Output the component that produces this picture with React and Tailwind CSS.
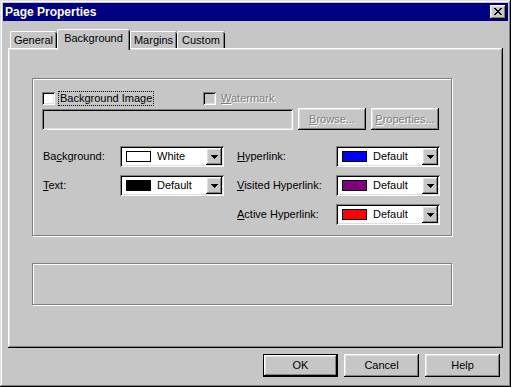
import React from "react";

const raised =
  "shadow-[inset_-1px_-1px_#000,inset_1px_1px_#fff,inset_-2px_-2px_#808080,inset_2px_2px_#dfdfdf]";
const sunken =
  "shadow-[inset_1px_1px_#808080,inset_-1px_-1px_#fff,inset_2px_2px_#000,inset_-2px_-2px_#dfdfdf]";
const disabledText = "text-[#808080] [text-shadow:1px_1px_0_#fff]";

function CloseGlyph() {
  const rows = [
    [0, 2, 6, 2],
    [1, 2, 5, 2],
    [2, 4],
    [3, 2],
    [2, 4],
    [1, 2, 5, 2],
    [0, 2, 6, 2],
  ];
  return (
    <svg width="8" height="7" viewBox="0 0 8 7" shapeRendering="crispEdges">
      {rows.map((r, y) => {
        const out = [];
        for (let i = 0; i < r.length; i += 2) {
          out.push(<rect key={y + "-" + i} x={r[i]} y={y} width={r[i + 1]} height="1" fill="#000" />);
        }
        return out;
      })}
    </svg>
  );
}

function Arrow() {
  return (
    <svg width="7" height="4" viewBox="0 0 7 4" shapeRendering="crispEdges">
      <rect x="0" y="0" width="7" height="1" fill="#000" />
      <rect x="1" y="1" width="5" height="1" fill="#000" />
      <rect x="2" y="2" width="3" height="1" fill="#000" />
      <rect x="3" y="3" width="1" height="1" fill="#000" />
    </svg>
  );
}

function Combo({ swatch, label }) {
  return (
    <div className={`w-[104px] h-[21px] bg-white ${sunken} flex items-center p-[2px]`}>
      <div className={`ml-[4px] w-[25px] h-[11px] border border-black ${swatch}`} />
      <span className="ml-[6px] flex-1 leading-[13px]">{label}</span>
      <div className={`w-[16px] h-[17px] bg-[#c6c6c6] ${raised} flex items-center justify-center`}>
        <Arrow />
      </div>
    </div>
  );
}

function Tab({ children, w, selected }) {
  if (selected) {
    return (
      <div
        className={`${w} h-[21px] -mb-[2px] relative z-10 bg-[#c6c6c6] rounded-t-[2px] shadow-[inset_1px_0_#fff,inset_0_1px_#fff,inset_-1px_0_#000,inset_-2px_0_#808080] flex justify-center pt-[3px] leading-[13px]`}
      >
        {children}
      </div>
    );
  }
  return (
    <div
      className={`${w} h-[17px] bg-[#c6c6c6] rounded-t-[2px] shadow-[inset_1px_0_#fff,inset_0_1px_#fff,inset_-1px_0_#000,inset_-2px_0_#808080] flex justify-center pt-[3px] leading-[13px]`}
    >
      {children}
    </div>
  );
}

function Btn({ children, isDefault }) {
  if (isDefault) {
    return (
      <div className="w-[75px] h-[23px] border border-black">
        <div className={`w-full h-full ${raised} flex items-center justify-center leading-[13px]`}>{children}</div>
      </div>
    );
  }
  return (
    <div className={`w-[75px] h-[23px] ${raised} flex items-center justify-center leading-[13px]`}>{children}</div>
  );
}

export default function App() {
  return (
    <div className="w-[511px] h-[387px] bg-[#c6c6c6] p-[3px] flex flex-col font-['Liberation_Sans',Arial,sans-serif] text-[11px] text-black shadow-[inset_-1px_-1px_#000,inset_1px_1px_#dfdfdf,inset_-2px_-2px_#808080,inset_2px_2px_#fff]">
      {/* Title bar */}
      <div className="h-[18px] bg-[#000080] flex items-center justify-between pl-[2px] pr-[2px]">
        <span className="text-white font-bold text-[12px] leading-[14px]">Page Properties</span>
        <div className={`w-[16px] h-[14px] bg-[#c6c6c6] ${raised} flex items-center justify-center pb-[1px]`}>
          <CloseGlyph />
        </div>
      </div>

      {/* Body */}
      <div className="flex flex-col px-[5px] pt-[8px]">
        {/* Tabs */}
        <div className="h-[19px] flex items-end pl-[2px]">
          <Tab w="w-[47px]">General</Tab>
          <Tab w="w-[73px]" selected>
            Background
          </Tab>
          <Tab w="w-[47px]">Margins</Tab>
          <Tab w="w-[48px]">Custom</Tab>
        </div>

        {/* Panel */}
        <div className={`h-[300px] ${raised} pl-[24px] pt-[30px] flex flex-col`}>
          {/* Group box */}
          <div className="w-[420px] h-[158px] border border-[#808080] shadow-[inset_1px_1px_#fff,1px_1px_#fff] pl-[9px] pt-[13px] flex flex-col">
            {/* Row 1 */}
            <div className="h-[13px] flex items-center">
              <div className="w-[161px] flex items-center">
                <div className={`w-[13px] h-[13px] bg-white ${sunken}`} />
                <span className="ml-[4px] px-[1px] leading-[13px] outline outline-1 outline-dotted outline-black">
                  Background Image
                </span>
              </div>
              <div className={`w-[13px] h-[13px] bg-[#c6c6c6] ${sunken}`} />
              <span className={`ml-[5px] leading-[13px] ${disabledText}`}>
                <span className="underline">W</span>atermark
              </span>
            </div>

            {/* Row 2 */}
            <div className="mt-[3px] flex items-end">
              <div className={`w-[251px] h-[21px] bg-[#c6c6c6] ${sunken}`} />
              <div className={`ml-[5px] w-[68px] h-[22px] ${raised} flex items-center justify-center leading-[13px] ${disabledText}`}>
                <span>
                  <span className="underline">B</span>rowse...
                </span>
              </div>
              <div className={`ml-[5px] w-[68px] h-[22px] ${raised} flex items-center justify-center leading-[13px] ${disabledText}`}>
                <span>
                  <span className="underline">P</span>roperties...
                </span>
              </div>
            </div>

            {/* Row 3: colors */}
            <div className="mt-[16px] flex">
              <div className="flex flex-col gap-[8px]">
                <div className="flex items-center">
                  <span className="w-[78px] pl-[1px]">
                    Ba<span className="underline">c</span>kground:
                  </span>
                  <Combo swatch="bg-white" label="White" />
                </div>
                <div className="flex items-center">
                  <span className="w-[78px] pl-[1px]">
                    <span className="underline">T</span>ext:
                  </span>
                  <Combo swatch="bg-black" label="Default" />
                </div>
              </div>
              <div className="ml-[13px] flex flex-col gap-[8px]">
                <div className="flex items-center">
                  <span className="w-[99px]">
                    <span className="underline">H</span>yperlink:
                  </span>
                  <Combo swatch="bg-[#0000ff]" label="Default" />
                </div>
                <div className="flex items-center">
                  <span className="w-[99px]">
                    <span className="underline">V</span>isited Hyperlink:
                  </span>
                  <Combo swatch="bg-[#800080]" label="Default" />
                </div>
                <div className="flex items-center">
                  <span className="w-[99px]">
                    <span className="underline">A</span>ctive Hyperlink:
                  </span>
                  <Combo swatch="bg-[#ff0000]" label="Default" />
                </div>
              </div>
            </div>
          </div>

          {/* Second box */}
          <div className="mt-[27px] w-[420px] h-[42px] border border-[#808080] shadow-[inset_1px_1px_#fff,1px_1px_#fff]" />
        </div>

        {/* Buttons */}
        <div className="mt-[6px] flex justify-end gap-[6px] pr-[3px]">
          <Btn isDefault>OK</Btn>
          <Btn>Cancel</Btn>
          <Btn>Help</Btn>
        </div>
      </div>
    </div>
  );
}
